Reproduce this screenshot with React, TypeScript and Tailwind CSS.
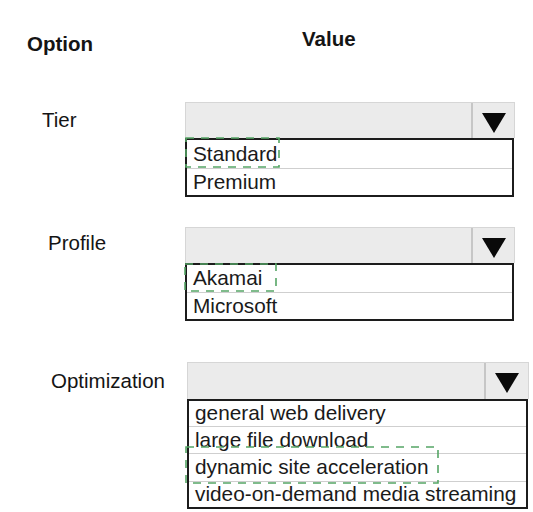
import React from "react";

function Arrow() {
  return (
    <svg width="24" height="20" viewBox="0 0 24 20" className="block">
      <polygon points="0,0 24,0 12,20" fill="#0a0a0a" />
    </svg>
  );
}

function Dropdown({
  items,
  rowHeights,
  grayH,
  arrowW,
}: {
  items: string[];
  rowHeights: number[];
  grayH: number;
  arrowW: number;
}) {
  return (
    <div className="flex flex-col w-full">
      <div
        className="flex bg-[#ebebeb] border border-[#d6d6d6] border-b-0"
        style={{ height: grayH }}
      >
        <div className="flex-1" />
        <div
          className="flex items-center justify-center border-l-2 border-[#c6c6c6] pt-[4px]"
          style={{ width: arrowW }}
        >
          <Arrow />
        </div>
      </div>
      <div className="border-2 border-[#1c1c1c] bg-white mr-[1px]">
        {items.map((it, i) => (
          <div
            key={it}
            className={
              "flex items-center pl-[6px] text-[20.8px] leading-none text-[#1a1a1a] whitespace-nowrap " +
              (i < items.length - 1 ? "border-b border-[#cfcfcf]" : "")
            }
            style={{ height: rowHeights[i] }}
          >
            {it}
          </div>
        ))}
      </div>
    </div>
  );
}

export default function App() {
  return (
    <div className="relative w-[533px] h-[512px] bg-white overflow-hidden font-['Liberation_Sans',Arial,sans-serif] text-[#141414]">
      {/* header */}
      <div className="flex h-[102px] pt-[29px]">
        <div className="w-[302px] pl-[27px] pt-[5px] text-[20.5px] font-bold leading-none">
          Option
        </div>
        <div className="text-[20.5px] font-bold leading-none">Value</div>
      </div>

      {/* Tier */}
      <div className="flex">
        <div className="w-[185px] shrink-0 pl-[42px] pt-[8px] text-[20.5px] leading-none">
          Tier
        </div>
        <div className="w-[330px]">
          <Dropdown
            items={["Standard", "Premium"]}
            rowHeights={[29, 26]}
            grayH={36}
            arrowW={43}
          />
        </div>
      </div>

      {/* Profile */}
      <div className="flex mt-[30px]">
        <div className="w-[185px] shrink-0 pl-[48px] pt-[6px] text-[20.5px] leading-none">
          Profile
        </div>
        <div className="w-[330px]">
          <Dropdown
            items={["Akamai", "Microsoft"]}
            rowHeights={[28, 26]}
            grayH={36}
            arrowW={43}
          />
        </div>
      </div>

      {/* Optimization */}
      <div className="flex mt-[41px]">
        <div className="w-[187px] shrink-0 pl-[51px] pt-[9px] text-[20.5px] leading-none">
          Optimization
        </div>
        <div className="w-[342px]">
          <Dropdown
            items={[
              "general web delivery",
              "large file download",
              "dynamic site acceleration",
              "video-on-demand media streaming",
            ]}
            rowHeights={[26, 27, 28, 25]}
            grayH={37}
            arrowW={44}
          />
        </div>
      </div>

      {/* answer markers */}
      <svg
        className="absolute left-0 top-0 pointer-events-none"
        width="533"
        height="512"
        viewBox="0 0 533 512"
      >
        <g fill="none" stroke="#55a565" strokeWidth="1.6" strokeDasharray="8 7">
          <rect x="186" y="138" width="93" height="29" />
          <rect x="185" y="264" width="91" height="27" />
          <rect x="186" y="447" width="252" height="36" />
        </g>
      </svg>
    </div>
  );
}
